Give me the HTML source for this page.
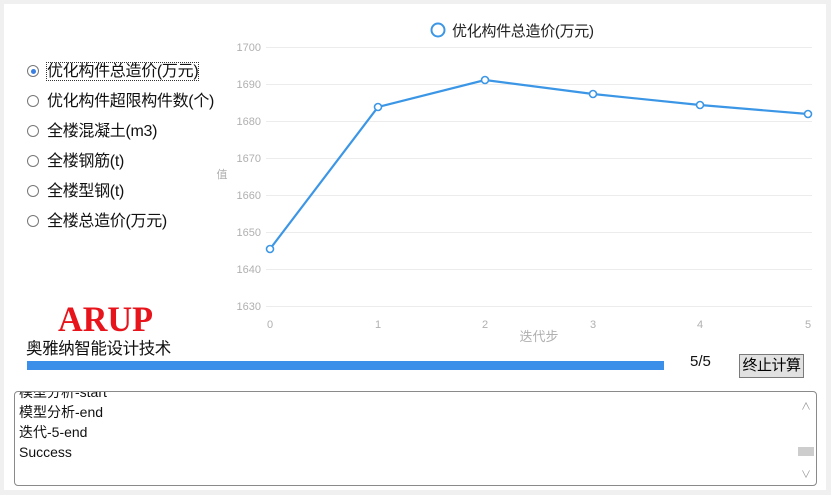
<!DOCTYPE html>
<html><head><meta charset="utf-8"><style>
body{margin:0;width:831px;height:495px;background:#f0f0f0;position:relative;overflow:hidden;font-family:"Liberation Sans","Noto Sans CJK SC",sans-serif;}
.panel{position:absolute;left:4px;top:4px;width:822px;height:486px;background:#fff;}
.r{position:absolute;left:27px;font-size:16px;color:#111;height:20px;line-height:20px;white-space:nowrap;letter-spacing:-0.3px}
.r i{display:inline-block;width:12px;height:12px;border:1px solid #777;border-radius:50%;vertical-align:-1px;margin-right:8px;box-sizing:border-box;position:relative}
.r i.on::after{content:"";position:absolute;left:2.5px;top:2.5px;width:5px;height:5px;border-radius:50%;background:#3a7fe0}
.ab{position:absolute;font-size:14px;color:#111}
</style></head><body>
<div class="panel"></div>
<div class="r" style="top:62px"><i class="on"></i><span style="outline:1px dotted #333">优化构件总造价(万元)</span></div>
<div class="r" style="top:92px"><i></i>优化构件超限构件数(个)</div>
<div class="r" style="top:122px"><i></i>全楼混凝土(m3)</div>
<div class="r" style="top:152px"><i></i>全楼钢筋(t)</div>
<div class="r" style="top:182px"><i></i>全楼型钢(t)</div>
<div class="r" style="top:212px"><i></i>全楼总造价(万元)</div>
<svg style="position:absolute;left:0;top:0" width="831" height="495">
<g stroke="#ececec" stroke-width="1">
<line x1="266" x2="812" y1="47.5" y2="47.5"/><line x1="266" x2="812" y1="84.5" y2="84.5"/><line x1="266" x2="812" y1="121.5" y2="121.5"/><line x1="266" x2="812" y1="158.5" y2="158.5"/><line x1="266" x2="812" y1="195.5" y2="195.5"/><line x1="266" x2="812" y1="232.5" y2="232.5"/><line x1="266" x2="812" y1="269.5" y2="269.5"/><line x1="266" x2="812" y1="306.5" y2="306.5"/>
</g>
<g font-size="11" fill="#b0b0b0" text-anchor="end" font-family="Liberation Sans,sans-serif">
<text x="261" y="51">1700</text><text x="261" y="88">1690</text><text x="261" y="125">1680</text><text x="261" y="162">1670</text><text x="261" y="199">1660</text><text x="261" y="236">1650</text><text x="261" y="273">1640</text><text x="261" y="310">1630</text>
</g>
<g font-size="11" fill="#b0b0b0" text-anchor="middle">
<text x="270" y="328">0</text><text x="378" y="328">1</text><text x="485" y="328">2</text><text x="593" y="328">3</text><text x="700" y="328">4</text><text x="808" y="328">5</text>
<text x="539" y="341" font-size="13" font-family="Noto Sans CJK SC,sans-serif">迭代步</text>
<text x="222" y="178" font-size="11" font-family="Noto Sans CJK SC,sans-serif">值</text>
</g>
<polyline fill="none" stroke="#3c96e6" stroke-width="2.2" points="270,249 378,107 485,80 593,94 700,105 808,114"/>
<g fill="#fff" stroke="#3c96e6" stroke-width="1.6">
<circle cx="270" cy="249" r="3.5"/><circle cx="378" cy="107" r="3.5"/><circle cx="485" cy="80" r="3.5"/><circle cx="593" cy="94" r="3.5"/><circle cx="700" cy="105" r="3.5"/><circle cx="808" cy="114" r="3.5"/>
<circle cx="438" cy="30" r="6.5" stroke-width="2"/>
</g>
<text x="452" y="36" font-size="15" fill="#222" letter-spacing="-0.3" font-family="Liberation Sans,Noto Sans CJK SC,sans-serif">优化构件总造价(万元)</text>
</svg>
<div class="ab" style="left:58px;top:299px;font-family:'Liberation Serif',serif;font-weight:bold;font-size:36px;color:#e8141c;line-height:40px;transform:scaleX(0.95);transform-origin:left">ARUP</div>
<div class="ab" style="left:26px;top:335px;font-size:16.5px;letter-spacing:-0.4px">奥雅纳智能设计技术</div>
<div style="position:absolute;left:27px;top:361px;width:637px;height:9px;background:#3c8fe8"></div>
<div class="ab" style="left:690px;top:353px;font-size:15px">5/5</div>
<div style="position:absolute;left:739px;top:354px;width:65px;height:24px;background:#e1e1e1;border:1px solid #7a7a7a;box-sizing:border-box;font-size:15px;line-height:22px;text-align:center;letter-spacing:-0.5px">终止计算</div>
<div style="position:absolute;left:14px;top:391px;width:803px;height:95px;border:1px solid #8a8a8a;border-radius:4px;box-sizing:border-box;overflow:hidden;font-size:14px;line-height:20px;color:#111">
<div style="position:absolute;left:4px;top:-10px">模型分析-start<br>模型分析-end<br>迭代-5-end<br>Success</div>
<div style="position:absolute;right:2px;top:0;width:16px;height:93px;color:#999;font-size:10px;text-align:center">
<div style="margin-top:6px">∧</div><div style="position:absolute;top:55px;left:0;width:16px;height:9px;background:#cdcdcd"></div><div style="position:absolute;top:74px;width:16px">∨</div></div>
</div>
</body></html>
